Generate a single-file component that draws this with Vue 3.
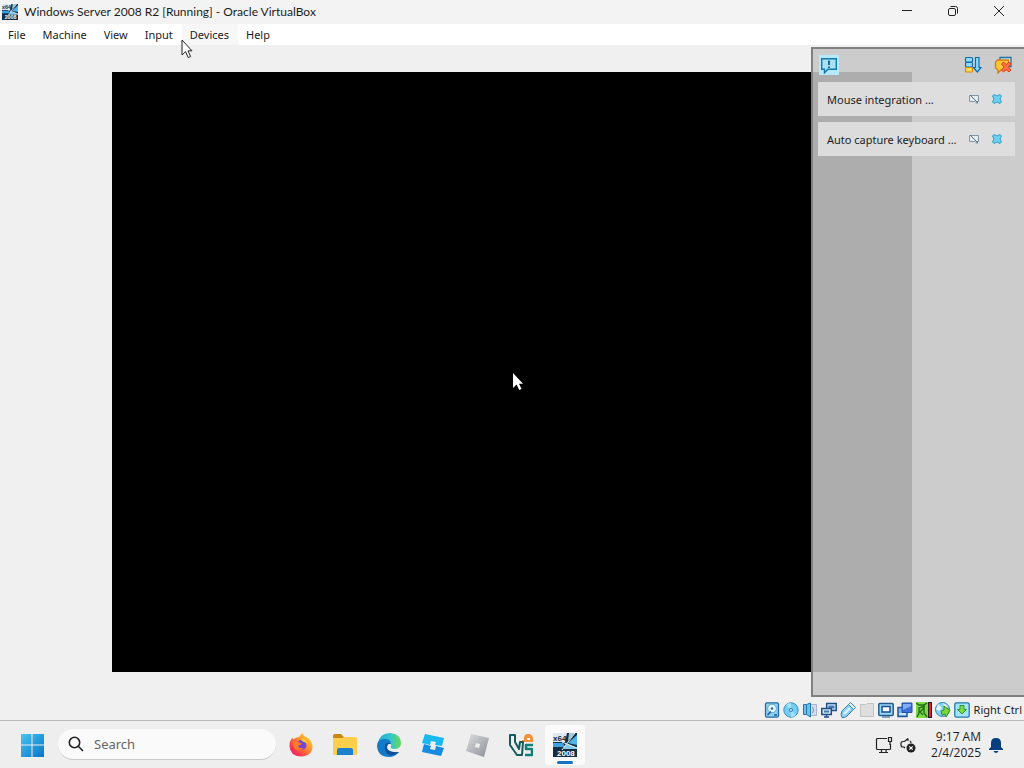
<template>
  <div class="desktop">
    <header class="titlebar">
      <svg class="app-icon" viewBox="0 0 24 24">
        <use href="#vm-logo" />
      </svg>
      <h1>Windows Server 2008 R2 [Running] - Oracle VirtualBox</h1>
      <div class="window-buttons">
        <button aria-label="Minimize">
          <svg viewBox="0 0 12 12"><path d="M1 5.500h10" /></svg>
        </button>
        <button aria-label="Restore">
          <svg viewBox="0 0 12 12"><rect x="1.5" y="3.5" width="7" height="7" rx="1.5" /><path d="M3.5 1.5h5q2 0 2 2v5" /></svg>
        </button>
        <button aria-label="Close">
          <svg viewBox="0 0 12 12"><path d="M1 1l10 10M11 1L1 11" /></svg>
        </button>
      </div>
    </header>

    <nav class="menubar">
      <button v-for="item in menu" :key="item" :class="{ hovered: item === 'Devices' }">{{ item }}</button>
      <svg class="pointer host-pointer" viewBox="0 0 12 20">
        <path d="M1 1v15l3.6-3.4 2.6 6 2.4-1-2.6-5.8H11z" fill="#fff" stroke="#222" />
      </svg>
    </nav>

    <main class="viewport">
      <div class="guest">
        <svg class="pointer guest-pointer" viewBox="0 0 12 20">
          <path d="M1 1v15l3.6-3.4 2.6 5.4 2.4-1-2.6-5.2H11z" fill="#fff" />
        </svg>
      </div>

      <aside class="notifications">
        <div class="panel-tools">
          <button class="active" aria-label="Keep open">
            <svg viewBox="0 0 18 18">
              <path d="M1.700 2.700h14.600v10.600H8l-3.500 3.500v-3.500H1.700z" fill="#a4e2f8" stroke="#1878a8" stroke-width="1.400" />
              <path d="M9 4.500v4.500M9 10.500v1.500" stroke="#0d4775" stroke-width="1.600" />
            </svg>
          </button>
          <button class="sort" aria-label="Toggle order">
            <svg viewBox="0 0 18 18">
              <g stroke="#126ba8" stroke-width="1.200" fill="#8fdcfa">
                <rect x="1.500" y="1.500" width="7" height="4.500" rx="1" />
                <rect x="1.500" y="6.500" width="7" height="4.500" rx="1" />
                <rect x="1.500" y="11.500" width="7" height="4.500" rx="1" fill="#ffdf4a" stroke="#d98515" />
                <path d="M11.500 1.500h3.500v10h2l-3.700 4.500-3.800-4.500h2z" />
              </g>
            </svg>
          </button>
          <button aria-label="Delete all">
            <svg viewBox="0 0 18 18">
              <path d="M6 1.500h11v9H6z" fill="#cfe8f4" stroke="#27709d" stroke-width="1.300" />
              <path d="M3.500 4h11v10H7l-3 3v-3l-2.500-2V6z" fill="#ffc634" stroke="#d97b13" stroke-width="1.300" />
              <path d="M7.500 8l2-2 2.800 2.500L15 6l2 2-2.500 3 2.500 3-2 2-2.700-2.500L9.500 16l-2-2 2.500-3z" fill="#fa7148" stroke="#d94320" />
            </svg>
          </button>
        </div>
        <section v-for="note in notifications" :key="note" class="note">
          <span>{{ note }}</span>
          <button aria-label="Do not show again">
            <svg viewBox="0 0 12 12">
              <path d="M1.500 2.500h9v6H9v2l-2-2H1.500z" fill="#e4ebef" stroke="#8296a5" />
              <path d="M2 2l8 8" stroke="#536f82" />
            </svg>
          </button>
          <button aria-label="Close notification">
            <svg viewBox="0 0 12 12">
              <path d="M1.500 3L3 1.500l3 1.500 3-1.500L10.500 3 9 6l1.500 3L9 10.500 6 9l-3 1.500L1.500 9 3 6z" fill="#6fd0f0" stroke="#2c9fca" />
            </svg>
          </button>
        </section>
      </aside>
    </main>

    <footer class="statusbar">
      <!-- hard disk -->
      <svg viewBox="0 0 16 16">
        <rect x="1.500" y=".8" width="13" height="14.400" rx="1.500" fill="#8fd0f4" stroke="#236da3" stroke-width="1.300" />
        <circle cx="8" cy="6.500" r="4.300" fill="#e8f8ff" stroke="#5aa5d0" />
        <circle cx="8" cy="6.500" r="1.300" fill="#286c9c" />
        <path d="M3.500 13l3.500-3.500M10 13h3" stroke="#185a91" stroke-width="1.500" />
      </svg>
      <!-- optical disc -->
      <svg viewBox="0 0 16 16">
        <circle cx="8" cy="8" r="7.200" fill="#76cdf4" stroke="#3a8dbd" />
        <path d="M8 8L3 3a7 7 0 0 1 5-2zM8 8l5 5a7 7 0 0 1-5 2z" fill="#a3e2fc" />
        <circle cx="8" cy="8" r="1.500" fill="#e8faff" stroke="#2677a9" />
      </svg>
      <!-- audio -->
      <svg viewBox="0 0 16 16">
        <path d="M9 2.500h5.500v11H9" fill="#d3dcee" stroke="#a9b2d0" />
        <path d="M1.500 2.500h3l4-1.500v14l-4-2.500h-3z" fill="#69c1ee" stroke="#2676a8" />
        <path d="M4.500 3v9" stroke="#2676a8" />
        <path d="M10.500 5q2 3 0 6" fill="none" stroke="#5b9cc6" />
      </svg>
      <!-- network -->
      <svg viewBox="0 0 16 16">
        <path d="M5.700 1.500h9.500v7H5.700z" fill="#d5e9fa" stroke="#214c85" stroke-width="1.500" />
        <path d="M7.500 3.500h6v3h-6z" fill="#407bb6" />
        <path d="M.8 6.500h9.500v6H.8zM5.500 13v2M3 15h5" fill="#d5e9fa" stroke="#214c85" stroke-width="1.500" />
        <path d="M3 8.500h5v2H3z" fill="#407bb6" />
      </svg>
      <!-- usb -->
      <svg viewBox="0 0 16 16">
        <path d="M2 9l6.500-6.500 5 5L7 14q-2 2-5 1.500Q0 12 2 9z" fill="#8dd1f5" stroke="#347eb0" />
        <path d="M8.500 2.500l2-2 5 5-2 2z" fill="#e6f5fc" stroke="#347eb0" />
        <path d="M4 12l6-6" stroke="#dff6ff" stroke-width="2" />
      </svg>
      <!-- shared folders, disabled -->
      <svg viewBox="0 0 16 16">
        <path d="M1.500 2.500H7l1-1h6.500v13h-13z" fill="#dedede" stroke="#c2c2c2" />
      </svg>
      <!-- display -->
      <svg viewBox="0 0 16 16">
        <rect x=".8" y="1.500" width="14.400" height="12" rx="1" fill="#9bd9f8" stroke="#245b91" stroke-width="1.500" />
        <rect x="4" y="4.500" width="8" height="5.500" fill="#fff" stroke="#154f8c" stroke-width="1.500" />
        <path d="M4 15h8" stroke="#245b91" />
      </svg>
      <!-- recording -->
      <svg viewBox="0 0 16 16">
        <path d="M1 5.500h9v9H1z" fill="#70b7ed" stroke="#24589b" stroke-width="1.500" />
        <path d="M5 1h10v9.500H5z" fill="#3f70d8" stroke="#2351a5" />
        <path d="M6 2h8v2L6 8z" fill="#82adf6" />
        <path d="M2 12h7" stroke="#e3f5ff" stroke-width="1.500" />
      </svg>
      <!-- processor -->
      <svg viewBox="0 0 16 16">
        <rect width="12" height="16" fill="#7dd944" />
        <path d="M0 1l3 2h5l3-2M1 15l2-4V6l6-2M4 10l4-4v5l3 4M4 10l3 3" fill="none" stroke="#246d19" stroke-width="1.400" />
        <rect x="12" width="4" height="16" fill="#272323" />
        <rect x="13" y="1" width="2" height="14" fill="#dc251d" />
      </svg>
      <!-- mouse integration -->
      <svg viewBox="0 0 16 16">
        <circle cx="7.500" cy="7.500" r="7" fill="#83d3f2" stroke="#337fa8" />
        <path d="M3 2l4 4-3 3-3-2M8 1l5 3-3 3z" fill="#e4f8ff" />
        <path d="M6 9l3-1V4l6 4.500-4 6.500-1-3-3 1z" fill="#76d63b" stroke="#36921d" />
      </svg>
      <!-- keyboard -->
      <svg viewBox="0 0 16 16">
        <rect x=".8" y=".8" width="14.400" height="14.400" rx="1.500" fill="#a2e4fa" stroke="#237aa8" stroke-width="1.300" />
        <path d="M6 3.500h4v4h2.500L8 12 3.500 7.500H6z" fill="#7ddc47" stroke="#319330" />
      </svg>
      <span>Right Ctrl</span>
    </footer>

    <div class="taskbar">
      <button class="task" aria-label="Start">
        <svg viewBox="0 0 24 24">
          <defs>
            <linearGradient id="start-fill" x2="1" y2="1">
              <stop stop-color="#48c5f0" />
              <stop offset="1" stop-color="#0675c9" />
            </linearGradient>
          </defs>
          <path d="M1 1h10.500v10.500H1zM12.500 1H24v10.500H12.500zM1 12.500h10.500V24H1zM12.500 12.500H24V24H12.500z" fill="url(#start-fill)" />
        </svg>
      </button>
      <label class="search">
        <svg viewBox="0 0 16 16"><circle cx="6.500" cy="6.500" r="5.200" /><path d="M10.300 10.300L15 15" /></svg>
        <input type="text" placeholder="Search" aria-label="Search">
      </label>
      <button class="task" aria-label="Firefox">
        <svg viewBox="0 0 24 24">
          <defs>
            <linearGradient id="fox-fill" x1="1" x2="0" y2="1">
              <stop stop-color="#ffe93a" />
              <stop offset=".4" stop-color="#ff9526" />
              <stop offset=".75" stop-color="#fc364f" />
              <stop offset="1" stop-color="#df1785" />
            </linearGradient>
          </defs>
          <path d="M3 5q1 1 2 1 2-2 5-2 1-2 4-4 0 3 3 4 5 2 6.500 8Q24 23 12 23.500 1 23 .5 13 .4 8 3 5z" fill="url(#fox-fill)" />
          <circle cx="12.500" cy="12" r="5" fill="#7344d6" />
          <path d="M4 8l6 1 3 2-4 2q1 3 6 2-5 5-10 0-2-3-1-7z" fill="#ff7a2a" />
          <path d="M12 5q6 1 7 7-2-3-4-3-3-1-3-4z" fill="#ffc931" />
        </svg>
      </button>
      <button class="task" aria-label="File Explorer">
        <svg viewBox="0 0 24 24">
          <path d="M0 3q0-2 2-2h6l3 3h11v7H0z" fill="#c98613" />
          <path d="M0 5h9l2-1h11q2 0 2 2v15q0 1-1 1H1q-1 0-1-1z" fill="#ffcf4b" />
          <path d="M4 22v-5q0-2 2-2h12q2 0 2 2v5z" fill="#1c80cc" />
        </svg>
      </button>
      <button class="task" aria-label="Edge">
        <svg viewBox="0 0 24 24">
          <defs>
            <linearGradient id="edge-top" x2="1">
              <stop stop-color="#2aa9e2" />
              <stop offset=".55" stop-color="#32c7c8" />
              <stop offset="1" stop-color="#68d957" />
            </linearGradient>
          </defs>
          <path d="M1 10Q3 0 13 0q11 1 11 10 0 6-7 6-4 0-3-3 1-5-5-6-6 0-8 3z" fill="url(#edge-top)" />
          <path d="M0 13Q0 6 8 6q6 0 6 5-3-1-4 2-1 7 12 6-4 5-10 5Q1 24 0 13z" fill="#127ac9" />
          <path d="M8 12q3-4 6-1-3-1-4 2-1 7 12 6-4 4-9 3-6-2-5-10z" fill="#104f99" />
        </svg>
      </button>
      <button class="task" aria-label="Roblox Studio">
        <svg viewBox="0 0 24 24">
          <path d="M4 1l19 4-2 8-7-1 1-3-5-1-1 4-8-2z" fill="#19b8ed" />
          <path d="M3 11l7 2-1 3 5 1 1-4 8 2-3 8-19-4z" fill="#168bdf" />
        </svg>
      </button>
      <button class="task" aria-label="Roblox">
        <svg viewBox="0 0 24 24">
          <defs>
            <linearGradient id="silver-fill" x2="1" y2="1">
              <stop stop-color="#dcdddf" />
              <stop offset="1" stop-color="#8c9095" />
            </linearGradient>
          </defs>
          <path d="M6 1l18 4-5 19-18-6zM11 10l-1 4 4 1 1-4z" fill="url(#silver-fill)" fill-rule="evenodd" />
        </svg>
      </button>
      <button class="task" aria-label="VirtualBox">
        <svg viewBox="0 0 24 24" fill="none" stroke-width="2" stroke-linejoin="round">
          <path d="M13 9V7h2V5q0-4 4-4 5 0 5 5v3z" fill="#f2913a" />
          <path d="M18 6h3" stroke="#fff" />
          <path d="M24 12h-7v4h6v6h-7" stroke="#138078" stroke-width="2.500" />
          <path d="M1 2h5v7l4 7 1-7h3l-1 13H8L1 12z" stroke="#155c60" />
        </svg>
      </button>
      <button class="task running" aria-label="Windows Server 2008 R2">
        <svg viewBox="0 0 24 24">
          <g id="vm-logo">
            <rect width="24" height="24" fill="#142f45" />
            <path d="M0 0h14l-2 9H0z" fill="#dce9f0" />
            <path d="M16 0h6l-7 8z" fill="#9fc6dc" />
            <path d="M0 10h10l2 4H0z" fill="#3fa2e0" />
            <path d="M24 2v10l-9-2z" fill="#4fb4e8" />
            <path d="M13 11l4 1 7 3v1H10z" fill="#86c8ea" />
            <path d="M22 0L12 13l-3 4M9 9l15 6" fill="none" stroke="#e4f3fa" />
            <text class="logo-text dark" x="0" y="8">x64</text>
            <text class="logo-text" x="4" y="23">2008</text>
          </g>
        </svg>
      </button>

      <div class="tray">
        <svg class="tray-icon" viewBox="0 0 18 18">
          <path d="M12 2.500H2.500q-1 0-1 1v9q0 1 1 1h12q1 0 1-1V8M6.500 14v2M11 14v2M4 16.500h9M13.500 1.500h3v4h-3zM15 6v3" />
        </svg>
        <svg class="tray-icon" viewBox="0 0 18 18">
          <path d="M9 2.500L5.500 5.500H4q-2 0-2 2V9q0 2 2 2h1l1 1M9 2.500V5M11 5q1 1 1 2" />
          <circle cx="12" cy="12" r="4.500" fill="#222" stroke="none" />
          <path d="M10.300 10.300l3.400 3.400M13.700 10.300l-3.400 3.400" class="mute-cross" />
        </svg>
        <div class="clock">
          <span>9:17 AM</span>
          <span>2/4/2025</span>
        </div>
        <svg class="bell" viewBox="0 0 14 16">
          <path d="M7 1q5 0 5 5v4l2 2v1H0v-1l2-2V6q0-5 5-5zM4.500 14h5q-1 2-2.500 2t-2.500-2z" fill="#073e7d" />
        </svg>
      </div>
    </div>
  </div>
</template>

<script setup>
const menu = ["File", "Machine", "View", "Input", "Devices", "Help"];
const notifications = ["Mouse integration ...", "Auto capture keyboard ..."];
</script>

<style>
body {
  margin: 0;
  background: #f0f0f0;
}
</style>

<style scoped>
.desktop {
  display: flex;
  flex-direction: column;
  min-height: 100vh;
  color: #1c1c1c;
  font-family: "Noto Sans", "Open Sans", sans-serif;
  font-size: 11px;
  line-height: 16px;
}

button {
  padding: 0;
  border: 0;
  background: none;
  color: inherit;
  font: inherit;
}

svg {
  display: block;
  flex: none;
}

.titlebar {
  display: flex;
  align-items: center;
  height: 24px;
  padding-left: 2px;
  background: #f3f3f3;
}

.app-icon {
  width: 16px;
  height: 16px;
}

.titlebar h1 {
  margin: 0 0 0 6px;
  font-family: Lato, sans-serif;
  font-size: 12px;
  font-weight: 400;
}

.window-buttons {
  display: flex;
  align-self: flex-start;
  margin-left: auto;
  padding-right: 2px;
}

.window-buttons button {
  display: grid;
  place-items: center;
  width: 46px;
  height: 21px;
}

.window-buttons svg {
  width: 12px;
  height: 12px;
  fill: none;
  stroke: #222;
}

.menubar {
  position: relative;
  display: flex;
  height: 21px;
  background: #fff;
}

.menubar button {
  padding: 0 9px 0 8px;
}

.menubar .hovered {
  background: #f7f7f7;
}

.pointer {
  position: absolute;
  z-index: 2;
  width: 12px;
  height: 20px;
}

.host-pointer {
  top: 15px;
  left: 181px;
}

.viewport {
  position: relative;
  display: flex;
  flex: 1;
  align-items: center;
  justify-content: center;
  background: #f0f0f0;
}

.guest {
  position: relative;
  width: 100%;
  max-width: 800px;
  aspect-ratio: 4 / 3;
  background: #000;
}

.guest-pointer {
  top: 50%;
  left: 50%;
}

.notifications {
  position: absolute;
  top: 2px;
  right: 0;
  bottom: 2px;
  box-sizing: border-box;
  width: 213px;
  padding: 6px 9px 6px 5px;
  border: 2px solid #808080;
  border-right: 0;
  background: rgba(199, 199, 199, 0.87);
}

.panel-tools {
  display: flex;
  gap: 10px;
  margin-bottom: 7px;
  padding: 0 2px 0 1px;
}

.panel-tools button {
  padding: 1px;
}

.panel-tools svg {
  width: 18px;
  height: 18px;
}

.panel-tools .active {
  background: #b5e8fb;
}

.panel-tools .sort {
  margin-left: auto;
}

.note {
  display: flex;
  align-items: center;
  gap: 11px;
  height: 34px;
  margin-bottom: 6px;
  padding: 0 12px 0 9px;
  background: rgba(222, 222, 222, 0.95);
}

.note span {
  flex: 1;
  padding-top: 2px;
  white-space: nowrap;
}

.note svg {
  width: 12px;
  height: 12px;
}

.statusbar {
  display: flex;
  align-items: center;
  justify-content: flex-end;
  gap: 3px;
  height: 21px;
  padding-right: 2px;
  background: #f0f0f0;
}

.statusbar svg {
  width: 16px;
  height: 16px;
}

.statusbar span {
  margin-left: 1px;
}

.taskbar {
  display: flex;
  align-items: center;
  gap: 4px;
  box-sizing: border-box;
  height: 48px;
  padding: 0 21px 0 12px;
  border-top: 1px solid #bdb9ba;
  background: #eeeeef;
}

.task {
  position: relative;
  display: grid;
  place-items: center;
  width: 40px;
  height: 40px;
  border-radius: 4px;
}

.task svg {
  width: 24px;
  height: 24px;
}

.running {
  background: #fafafa;
}

.running::after {
  position: absolute;
  bottom: 1px;
  left: 12px;
  width: 16px;
  height: 3px;
  border-radius: 2px;
  background: #1671c3;
  content: "";
}

.logo-text {
  fill: #fff;
  font: 700 8px "Liberation Sans", sans-serif;
}

.logo-text.dark {
  fill: #14283a;
}

.search {
  display: flex;
  align-items: center;
  gap: 10px;
  box-sizing: border-box;
  width: 218px;
  height: 31px;
  margin: 0 1px 0 2px;
  padding: 0 10px;
  border-bottom: 1px solid #ccc;
  border-radius: 16px;
  background: #fafafa;
}

.search svg {
  width: 16px;
  height: 16px;
  fill: none;
  stroke: #222;
  stroke-width: 1.6;
}

.search input {
  flex: 1;
  min-width: 0;
  padding: 0;
  border: 0;
  outline: 0;
  background: none;
  color: #333;
  font: 13px/20px "Noto Sans", sans-serif;
}

.search input::placeholder {
  color: #666;
}

.tray {
  display: flex;
  align-items: center;
  gap: 6px;
  margin-left: auto;
}

.tray-icon {
  width: 18px;
  height: 18px;
  fill: none;
  stroke: #222;
  stroke-width: 1.2;
}

.tray-icon .mute-cross {
  stroke: #fff;
}

.clock {
  display: flex;
  flex-direction: column;
  margin: 0 2px 0 8px;
  font-family: "Open Sans", sans-serif;
  font-size: 12px;
  text-align: right;
}

.bell {
  width: 14px;
  height: 16px;
}
</style>
